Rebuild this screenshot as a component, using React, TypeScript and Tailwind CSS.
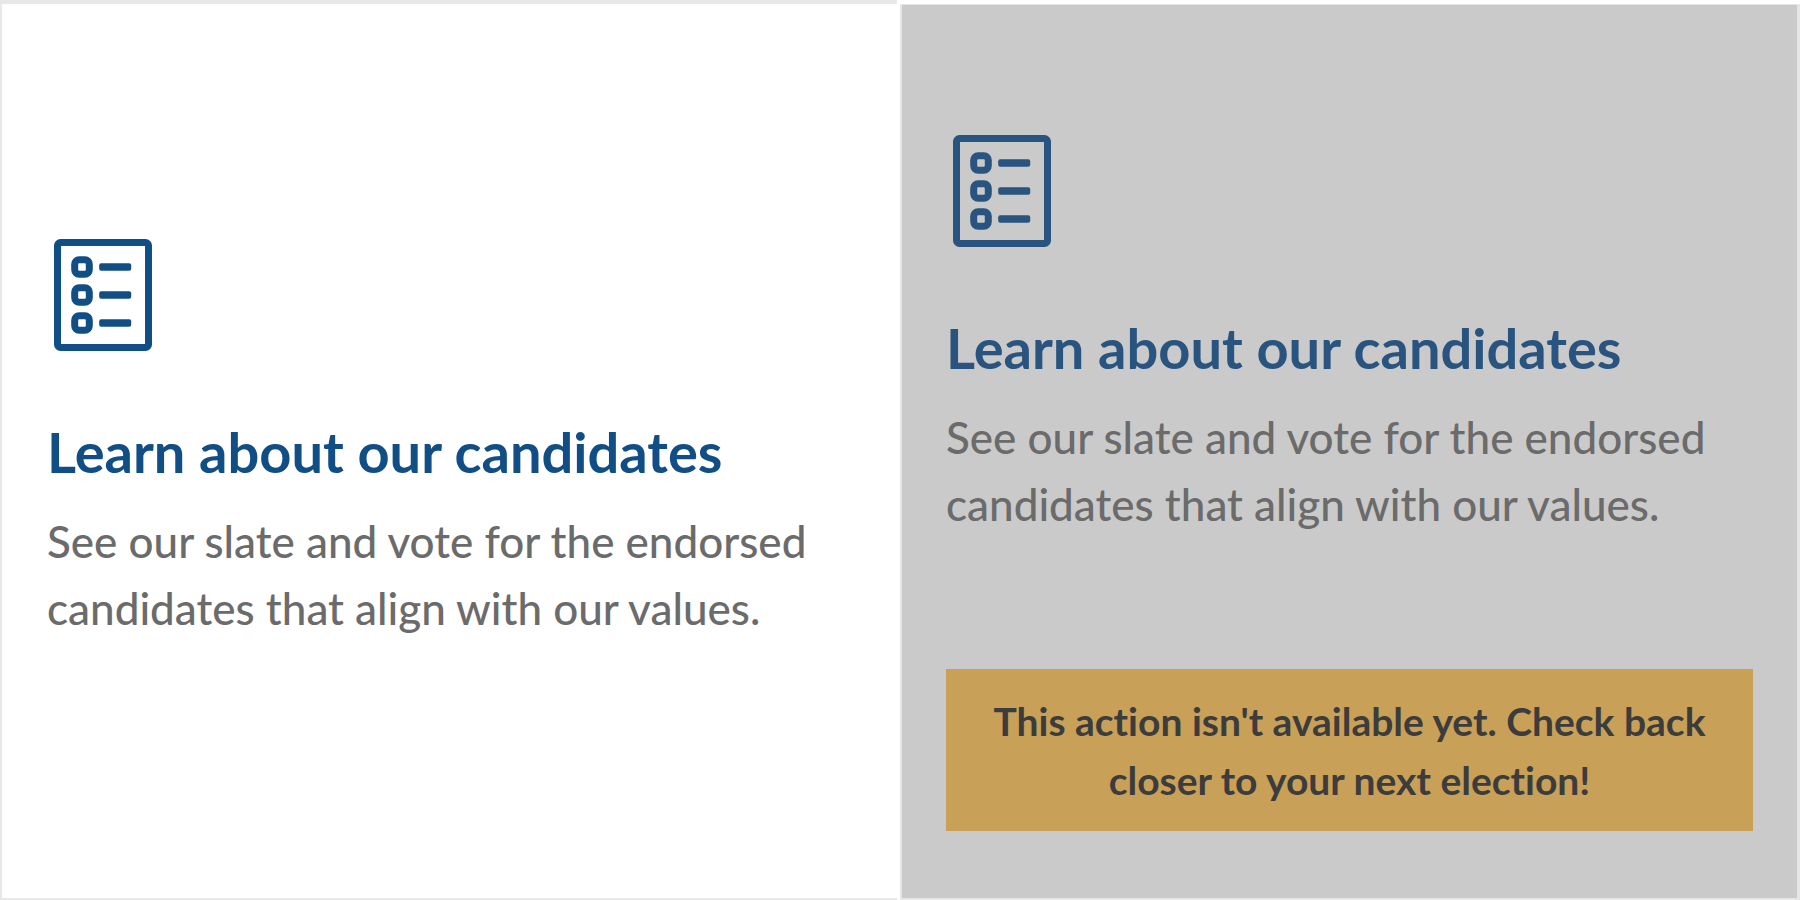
import React from "react";

function BallotIcon() {
  return (
    <svg viewBox="0 0 98 112" className="ml-[7px] h-[112px] w-[98px]" fill="none" stroke="currentColor" strokeWidth="7" aria-hidden="true">
      <rect x="3.5" y="3.5" width="91" height="105" rx="3" />
      {[28, 56, 84].map((y) => (
        <g key={y}>
          <rect x="20.7" y={y - 7.3} width="14.6" height="14.6" rx="4.5" />
          <rect x="45.2" y={y - 3.7} width="32" height="7.4" rx="2" fill="currentColor" stroke="none" />
        </g>
      ))}
    </svg>
  );
}

function CardBody() {
  return (
    <>
      <BallotIcon />
      <h2 className="mt-[65px] text-[56px] leading-[72px] font-bold">Learn about our candidates</h2>
      <p className="mt-5 text-[44px] leading-[67px] font-medium text-[#6b6b6b]">
        See our slate and vote for the endorsed candidates that align with our values.
      </p>
    </>
  );
}

export default function App() {
  return (
    <main className="grid min-h-screen grid-cols-2 bg-white font-['Lato',sans-serif] [font-variant-ligatures:none]">
      <section className="mr-[3px] flex flex-col justify-center border-t-4 border-b-2 border-l-2 border-[#e8e8e8] bg-white pr-[42px] pb-[22px] pl-[45px] text-[#104e85]">
        <CardBody />
      </section>
      <section className="mt-1 flex flex-col justify-end border-t border-r-[3px] border-b-2 border-l-2 border-[#e6e6e6] bg-[#cacaca] px-11 pb-[67px] text-[#29547f]">
        <CardBody />
        <div className="mt-[131px] bg-[#c8a058] px-10 pt-[23px] pb-[21px] text-center text-[39px] leading-[59px] font-bold text-[#3c3c3c]">
          This action isn't available yet. Check back closer to your next election!
        </div>
      </section>
    </main>
  );
}
